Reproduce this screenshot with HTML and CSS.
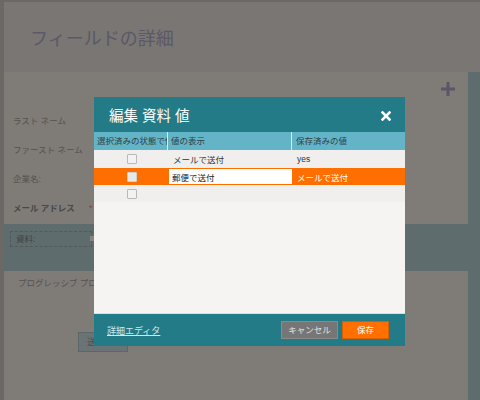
FILE: index.html
```html
<!DOCTYPE html>
<html lang="ja">
<head>
<meta charset="utf-8">
<link rel="stylesheet" href="styles.css">
</head>
<body>
<div class="page">
  <div class="header"><h1 class="title">フィールドの詳細</h1></div>
  <div class="content">
    <div class="plus">
      <svg width="14" height="14" viewBox="0 0 14 14"><path d="M7 0v14M0 7h14" stroke="#5a5668" stroke-width="3"/></svg>
    </div>
    <div class="fields">
      <div class="field">ラスト ネーム</div>
      <div class="field">ファースト ネーム</div>
      <div class="field">企業名:</div>
      <div class="field bold">メール アドレス<span class="req">*</span></div>
    </div>
    <div class="band">
      <div class="dotted">資料:<span class="mini"></span></div>
    </div>
    <div class="prog">プログレッシブ プロファイリング</div>
    <div class="sendrow"><span class="sendbtn">送信</span></div>
  </div>
</div>

<div class="modal">
  <div class="m-head">
    <span class="m-title">編集 資料 値</span>
    <svg class="m-close" width="10" height="10" viewBox="0 0 10 10"><path d="M1.5 1.5l7 7M8.5 1.5l-7 7" stroke="#fff" stroke-width="2.6" stroke-linecap="square"/></svg>
  </div>
  <div class="table">
    <div class="th c1"><span class="clip">選択済みの状態で値</span></div>
    <div class="th c2">値の表示</div>
    <div class="th c3">保存済みの値</div>

    <div class="td c1"><span class="cb"></span></div>
    <div class="td c2">メールで送付</div>
    <div class="td c3">yes</div>

    <div class="td c1 sel"><span class="cb"></span></div>
    <div class="td c2 sel"><span class="inp">郵便で送付</span></div>
    <div class="td c3 sel">メールで送付</div>

    <div class="td c1"><span class="cb"></span></div>
    <div class="td c2"></div>
    <div class="td c3"></div>
  </div>
  <div class="m-body"></div>
  <div class="m-foot">
    <a class="link" href="#">詳細エディタ</a>
    <div class="btns">
      <span class="btn cancel">キャンセル</span>
      <span class="btn save">保存</span>
    </div>
  </div>
</div>
</body>
</html>
```
FILE: styles.css
```css
html, body {
  margin: 0;
  padding: 0;
  width: 480px;
  height: 400px;
  overflow: hidden;
  background: #7f7b77;
  font-family: "Liberation Sans", "Noto Sans CJK JP", sans-serif;
}
.page {
  width: 476px;
  height: 398px;
  border-left: 4px solid #6b6866;
  border-top: 2px solid #6b6866;
  background: #7f7b77;
}
.header {
  height: 70px;
  background: #797673;
  display: flex;
  align-items: center;
  padding-left: 26px;
}
.title {
  margin: 0;
  font-weight: normal;
  font-size: 18px;
  color: #5b5868;
}
.content {
  position: relative;
  padding-top: 35px;
}
.plus {
  position: absolute;
  left: 437px;
  top: 10px;
  width: 14px;
  height: 14px;
}
.plus svg { display: block; }
.content::after {
  content: "";
  position: absolute;
  right: 0;
  top: 0;
  width: 12px;
  height: 328px;
  background: #5f6c6e;
}
.fields { display: flex; flex-direction: column; }
.field {
  height: 29px;
  line-height: 29px;
  padding-left: 9px;
  font-size: 8.5px;
  color: #55524f;
}
.field.bold { font-weight: bold; color: #4b4846; }
.req {
  color: #8a3a3a;
  font-weight: normal;
  margin-left: 14px;
}
.band {
  margin-top: 1px;
  height: 47px;
  background: #5f6c6e;
  padding: 7px 0 0 6px;
  box-sizing: border-box;
}
.dotted {
  width: 82px;
  height: 16px;
  border: 1px dashed #4f5a5c;
  box-sizing: border-box;
  font-size: 8.5px;
  line-height: 14px;
  padding-left: 5px;
  color: #3f4446;
  position: relative;
}
.mini {
  position: absolute;
  right: -4px;
  top: 4px;
  width: 5px;
  height: 5px;
  background: #8a8480;
}
.prog {
  padding-left: 14px;
  margin-top: 5px;
  height: 14px;
  font-size: 8.5px;
  color: #55524f;
}
.sendrow {
  padding-left: 74px;
  margin-top: 41px;
}
.sendbtn {
  display: inline-block;
  width: 40px;
  height: 18px;
  background: #6a7375;
  border: 1px solid #5d6668;
  color: #4a4f50;
  font-size: 9px;
  line-height: 18px;
  padding-left: 8px;
}

.modal {
  position: absolute;
  left: 94px;
  top: 97px;
  width: 311px;
  height: 249px;
  background: #f5f4f2;
  display: flex;
  flex-direction: column;
}
.m-head {
  height: 35px;
  background: #237b87;
  display: flex;
  align-items: center;
  justify-content: space-between;
  padding: 0 14px 0 15px;
  flex-shrink: 0;
}
.m-title {
  color: #fff;
  font-size: 14.5px;
}
.m-close { display: block; margin-top: 3px; }
.table {
  display: grid;
  grid-template-columns: 74px 124px 113px;
  grid-template-rows: 18px 18px 17px 17px;
}
.th {
  background: #64b4c8;
  font-size: 8.5px;
  color: #2f3f44;
  line-height: 18px;
  padding-left: 3px;
  white-space: nowrap;
  overflow: hidden;
  border-right: 1px solid #d4ecf2;
  min-width: 0;
}
.th .clip { display: block; overflow: hidden; }
.th.c3 { border-right: none; padding-left: 4px; }
.th.c2 { padding-left: 3px; }
.td {
  background: #f0efed;
  font-size: 8.5px;
  color: #333;
  display: flex;
  align-items: center;
  white-space: nowrap;
}
.td.c1 { justify-content: center; }
.td.c2 { padding-left: 5px; }
.td.c3 { padding-left: 5px; }
.td.sel { background: #ff6f00; color: #fff; }
.td.c2.sel { padding: 1px 0 0 1px; align-items: stretch; }
.inp {
  flex: 1;
  background: #fff;
  color: #222;
  padding-left: 3px;
  display: flex;
  align-items: center;
  margin-bottom: 1px;
}
.cb {
  width: 8px;
  height: 8px;
  border: 1px solid #b9b9b9;
  background: #f2f2f2;
  border-radius: 1px;
  margin-left: 2px;
}
.td.sel .cb { background: #e8e8e8; border-color: #cfcfcf; }
.m-body { flex: 1; }
.m-foot {
  height: 33px;
  background: #237b87;
  border-top: 1px solid #cfe3e6;
  display: flex;
  align-items: center;
  justify-content: space-between;
  padding: 0 16px 0 13px;
  flex-shrink: 0;
  box-sizing: border-box;
}
.link {
  color: #cde9ee;
  font-size: 9px;
  text-decoration: underline;
}
.btns { display: flex; gap: 4px; }
.btn {
  height: 16px;
  line-height: 16px;
  font-size: 8.5px;
  text-align: center;
  box-sizing: content-box;
}
.cancel {
  width: 55px;
  background: #767676;
  border: 1px solid #8a8a8a;
  color: #e2e2e2;
}
.save {
  width: 45px;
  background: #ff7000;
  border: 1px solid #d85f00;
  color: #fff;
}
```
